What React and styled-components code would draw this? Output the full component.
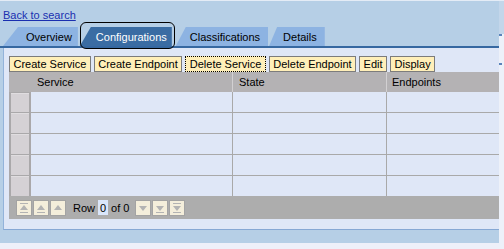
import React from "react";
import styled, { createGlobalStyle } from "styled-components";

const Global = createGlobalStyle`
  html, body { margin: 0; padding: 0; }
  body { background: #b6cfe6; font-family: "Liberation Sans", Arial, sans-serif; font-size: 11px; }
`;

const Page = styled.div`
  width: 504px;
  height: 249px;
  display: flex;
  overflow: hidden;
`;

const Main = styled.div`
  width: 499px;
  position: relative;
  display: flex;
  flex-direction: column;
`;

const TopLine = styled.div`
  height: 1px;
  background: #e4ecf6;
`;

const LinkArea = styled.div`
  height: 26px;
  box-sizing: border-box;
  padding: 8px 0 0 3px;
  line-height: 13px;
`;

const BackLink = styled.a`
  color: #1a2fb0;
  text-decoration: underline;
  font-size: 11px;
  cursor: pointer;
`;

const TabStrip = styled.div`
  height: 19px;
  display: flex;
  align-items: stretch;
  border-bottom: 2px solid #3668a1;
`;

const Tab = styled.div`
  margin-left: ${(p) => p.$ml}px;
  padding: 0 ${(p) => p.$pr}px 0 ${(p) => p.$pl}px;
  background: ${(p) => (p.$active ? "#3a6ca3" : "#8db3e2")};
  color: ${(p) => (p.$active ? "#ffffff" : "#000000")};
  clip-path: polygon(${(p) => p.$slant}px 0, 100% 0, 100% 100%, 0 100%);
  display: flex;
  align-items: center;
  padding-top: 1px;
  box-sizing: border-box;
  white-space: nowrap;
`;

const Highlight = styled.div`
  position: absolute;
  left: 80px;
  top: 22px;
  width: 95px;
  height: 27px;
  box-sizing: border-box;
  border: 1.5px solid #000;
  border-radius: 6px;
  pointer-events: none;
`;

const Panel = styled.div`
  margin-left: 3px;
  background: #dfe7f7;
  border-left: 1px solid #93b3da;
  border-bottom: 1px solid #86a8d4;
  padding: 8px 0 10px 5px;
  display: flex;
  flex-direction: column;
`;

const Toolbar = styled.div`
  display: flex;
  gap: 3px;
  height: 16px;
`;

const Button = styled.button`
  height: 16px;
  margin: 0;
  padding: 0 3.5px;
  box-sizing: border-box;
  background: #ffefb9;
  border: 1px ${(p) => (p.$focus ? "dotted #000" : "solid #7c7c7c")};
  font-family: "Liberation Sans", Arial, sans-serif;
  font-size: 11px;
  line-height: 14px;
  color: #000;
  white-space: nowrap;
  cursor: pointer;
`;

const Grid = styled.div`
  display: grid;
  grid-template-columns: 22px 202px 154px 112px;
`;

const HeadCell = styled.div`
  height: 20px;
  background: #b4b2b4;
  box-sizing: border-box;
  padding-left: ${(p) => p.$pl ?? 6}px;
  border-right: ${(p) => (p.$sep ? "1px solid #d2d0d2" : "none")};
  display: flex;
  align-items: center;
  color: #000;
`;

const SelCell = styled.div`
  height: ${(p) => (p.$first ? 20 : 21)}px;
  background: #aaa8aa;
  box-sizing: border-box;
  padding: 1px 2px 0 2px;
`;

const SelBox = styled.div`
  height: 100%;
  background: #d5d1d5;
  border-top: 1px solid #e0dde0;
  box-sizing: border-box;
`;

const DataCell = styled.div`
  height: ${(p) => (p.$first ? 20 : 21)}px;
  box-sizing: border-box;
  border-top: ${(p) => (p.$first ? "none" : "1px solid #a9a9a9")};
  border-right: ${(p) => (p.$sep ? "1px solid #a9a9a9" : "none")};
`;

const Footer = styled.div`
  width: 490px;
  height: 23px;
  background: #adadad;
  display: flex;
  align-items: center;
  padding-left: 7px;
  box-sizing: border-box;
`;

const NavButton = styled.div`
  width: 16px;
  height: 16px;
  box-sizing: border-box;
  background: #f4eedb;
  border: 1px solid #a3a3a3;
  margin-right: 1px;
  display: flex;
  align-items: center;
  justify-content: center;
`;

const RowLabel = styled.span`
  margin: 0 3px 0 6px;
  color: #000;
`;

const RowInput = styled.span`
  width: 10px;
  height: 15px;
  background: #dae6fa;
  display: flex;
  align-items: center;
  justify-content: center;
  color: #000;
`;

const OfLabel = styled.span`
  margin: 0 6px 0 3px;
  color: #000;
`;

const BottomBand = styled.div`
  height: 13px;
  background: #b6cfe6;
`;

const BottomEdge = styled.div`
  height: 6px;
  background: #eef0f9;
`;

const RightStrip = styled.div`
  width: 5px;
  display: flex;
  flex-direction: column;
  background: #edf1f9;
`;

const StripTop = styled.div`
  height: 33px;
  background: #c3d6ea;
  border-top: 1px solid #e4ecf6;
`;

const StripMark = styled.div`
  height: 2px;
  width: 3px;
  background: #5a84bb;
  margin-top: ${(p) => p.$mt}px;
`;

const Icon = ({ kind }) => {
  const c = "#b3b3b3";
  const up = kind.startsWith("up");
  const tri = up ? "M7 4 L3 9 L11 9 Z" : "M3 5 L11 5 L7 10 Z";
  return (
    <svg width="14" height="14" viewBox="0 0 14 14">
      {(kind === "up2" || kind === "dn2") && <rect x="3" y="2" width="8" height="1" fill={c} />}
      {(kind === "up2" || kind === "dn2" || kind === "up1" || kind === "dn1") && (
        <rect x="3" y="11" width="8" height="1" fill={c} />
      )}
      <path d={tri} fill={c} />
    </svg>
  );
};

const columns = ["Service", "State", "Endpoints"];
const rows = [0, 1, 2, 3, 4];

export default function App() {
  return (
    <>
      <Global />
      <Page>
        <Main>
          <TopLine />
          <LinkArea>
            <BackLink>Back to search</BackLink>
          </LinkArea>
          <TabStrip>
            <Tab $ml={3} $slant={15} $pl={23} $pr={6}>Overview</Tab>
            <Tab $ml={2} $slant={11} $pl={16} $pr={5} $active>Configurations</Tab>
            <Tab $ml={4} $slant={10} $pl={14} $pr={8}>Classifications</Tab>
            <Tab $ml={1} $slant={8} $pl={14} $pr={8}>Details</Tab>
          </TabStrip>
          <Highlight />
          <Panel>
            <Toolbar>
              <Button>Create Service</Button>
              <Button>Create Endpoint</Button>
              <Button $focus>Delete Service</Button>
              <Button>Delete Endpoint</Button>
              <Button>Edit</Button>
              <Button>Display</Button>
            </Toolbar>
            <Grid>
              <HeadCell />
              <HeadCell $sep>{columns[0]}</HeadCell>
              <HeadCell $sep>{columns[1]}</HeadCell>
              <HeadCell $pl={5}>{columns[2]}</HeadCell>
              {rows.map((r) => (
                <React.Fragment key={r}>
                  <SelCell $first={r === 0}>
                    <SelBox />
                  </SelCell>
                  <DataCell $first={r === 0} $sep />
                  <DataCell $first={r === 0} $sep />
                  <DataCell $first={r === 0} />
                </React.Fragment>
              ))}
            </Grid>
            <Footer>
              <NavButton><Icon kind="up2" /></NavButton>
              <NavButton><Icon kind="up1" /></NavButton>
              <NavButton><Icon kind="up" /></NavButton>
              <RowLabel>Row</RowLabel>
              <RowInput>0</RowInput>
              <OfLabel>of 0</OfLabel>
              <NavButton><Icon kind="dn" /></NavButton>
              <NavButton><Icon kind="dn1" /></NavButton>
              <NavButton><Icon kind="dn2" /></NavButton>
            </Footer>
          </Panel>
          <BottomBand />
          <BottomEdge />
        </Main>
        <RightStrip>
          <StripTop />
          <StripMark $mt={0} />
          <StripMark $mt={27} />
        </RightStrip>
      </Page>
    </>
  );
}
